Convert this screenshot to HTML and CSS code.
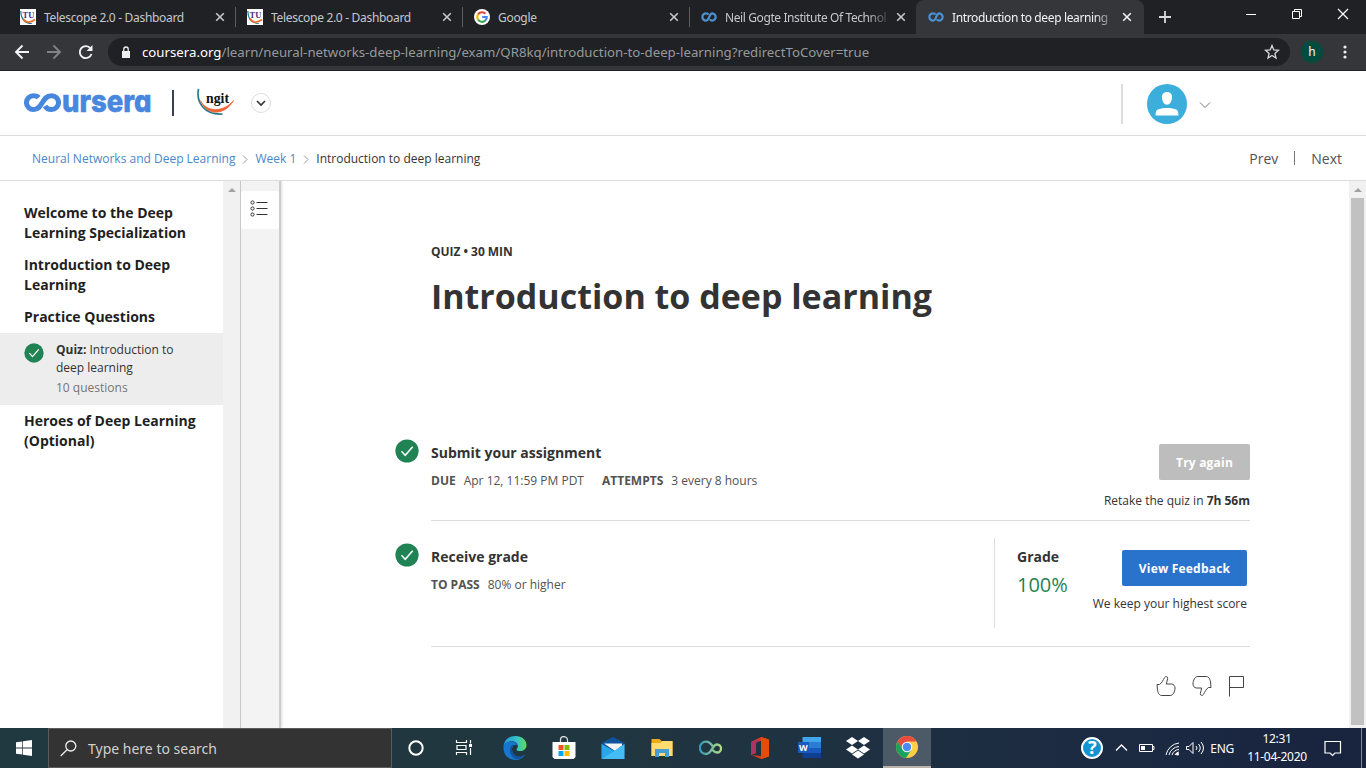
FILE: index.html
```html
<!DOCTYPE html>
<html lang="en">
<head>
<meta charset="utf-8">
<title>Introduction to deep learning | Coursera</title>
<link rel="stylesheet" href="styles.css">
</head>
<body>
<svg class="defs" width="0" height="0" aria-hidden="true">
  <symbol id="co" viewBox="0 0 16 10"><path d="M7.600 2.600C7 1.800 6.200 1.400 5.200 1.400A3.600 3.600 0 0 0 1.400 5a3.600 3.600 0 0 0 3.800 3.600C8.500 8.600 8 1.400 11.200 1.400A3.500 3.500 0 0 1 14.600 5a3.500 3.500 0 0 1-3.400 3.600C10.200 8.600 9.400 8.200 8.800 7.400" fill="none" stroke="#4a90d0" stroke-width="2.300"/></symbol>
  <symbol id="x" viewBox="0 0 10 10"><path d="M1.200 1.200l7.600 7.600M8.800 1.200L1.200 8.800" fill="none" stroke="currentColor" stroke-width="1.600"/></symbol>
  <symbol id="check" viewBox="0 0 24 24"><circle cx="12" cy="12" r="11.600" fill="#1f8354"/><path d="M6.500 12.200l3.700 4.100 7.500-8.600" fill="none" stroke="#fff" stroke-width="1.500"/></symbol>
  <symbol id="thumb" viewBox="0 0 20 22"><path d="M1 9.500h2.500c2.500-1.500 3.500-4.500 5.200-7 .8-1.500 3-1.200 3 .8 0 2.200-1.400 3.800-1.400 5.700h5.200c2.200.2 3.500 1.900 3.500 4 0 3.700-2 7.500-4.700 7.500H5.500C3 20.500 1.600 17 1.400 14z" fill="none" stroke="#444" stroke-width="1"/></symbol>
</svg>

<header class="browser">
  <div class="tabs">
    <div class="tab"><svg class="fav" viewBox="0 0 16 16"><path fill="#fff" d="M0 0h16v16H0z"/><path d="M.8 2c.2 8 4 12.500 11 12.500" fill="none" stroke="#14808c" stroke-width="1.200"/><path d="M3 9.500c2 4 7 5 12 1" fill="none" stroke="#ed702d" stroke-width="1.700"/><text x="2.500" y="9" class="tu">TU</text></svg><span class="tab-title">Telescope 2.0 - Dashboard</span><svg class="close"><use href="#x"/></svg></div>
    <div class="tab"><svg class="fav" viewBox="0 0 16 16"><path fill="#fff" d="M0 0h16v16H0z"/><path d="M.8 2c.2 8 4 12.500 11 12.500" fill="none" stroke="#14808c" stroke-width="1.200"/><path d="M3 9.500c2 4 7 5 12 1" fill="none" stroke="#ed702d" stroke-width="1.700"/><text x="2.500" y="9" class="tu">TU</text></svg><span class="tab-title">Telescope 2.0 - Dashboard</span><svg class="close"><use href="#x"/></svg></div>
    <div class="tab"><svg class="fav" viewBox="0 0 16 16"><circle cx="8" cy="8" r="8" fill="#fff"/><g fill="none" stroke-width="2.200"><path d="M4 5.500A4.800 4.800 0 0 1 11.500 4.700" stroke="#ea4335"/><path d="M4 5.500a4.800 4.800 0 0 0 0 5" stroke="#fbbc05"/><path d="M4 10.500a4.800 4.800 0 0 0 7.200 1.200" stroke="#34a853"/><path d="M11.200 11.700C12.500 10.500 12.800 9.500 12.700 8H8.200" stroke="#4285f4"/></g></svg><span class="tab-title">Google</span><svg class="close"><use href="#x"/></svg></div>
    <div class="tab last"><svg class="fav"><use href="#co"/></svg><span class="tab-title neil">Neil Gogte Institute Of Technol</span><svg class="close"><use href="#x"/></svg></div>
    <div class="tab active"><svg class="fav"><use href="#co"/></svg><span class="tab-title intro">Introduction to deep learning |</span><svg class="close"><use href="#x"/></svg></div>
    <svg class="plus" viewBox="0 0 12 12"><path d="M6 0v12M0 6h12" stroke="#d8dadd" stroke-width="1.800"/></svg>
    <svg class="window-controls" viewBox="0 0 110 14"><g fill="none" stroke="#fff"><path d="M4 7.500h10"/><path d="M50.500 4.500h7v7h-7zM52.500 4V2.500h7v7H58"/><path d="M96 2l10 10M106 2L96 12" stroke-width="1.200"/></g></svg>
  </div>
  <div class="toolbar">
    <svg class="nav-icons" viewBox="0 0 90 18"><g fill="none" stroke="#f1f3f4" stroke-width="1.900"><path d="M21 9H8M14.500 2.500L8 9l6.500 6.500"/><path d="M39 9h13M45.500 2.500L52 9l-6.500 6.500" stroke="#808286"/><path d="M82.600 5.500A6 6 0 1 0 83.500 11"/></g><path d="M84.500 2v6h-6z" fill="#f1f3f4"/></svg>
    <div class="address">
      <svg class="lock" viewBox="0 0 10 13"><path d="M1 5h8v7H1z" fill="#eee"/><path d="M2.800 5V3.200a2.200 2.200 0 0 1 4.400 0V5" fill="none" stroke="#eee" stroke-width="1.300"/></svg>
      <span class="url"><b>coursera.org</b>/learn/neural-networks-deep-learning/exam/QR8kq/introduction-to-deep-learning?redirectToCover=true</span>
      <svg class="star" viewBox="0 0 16 16"><path d="M8 1.500l1.800 4.400 4.700.4-3.600 3.100 1.100 4.600L8 11.500 4 14l1.100-4.600-3.600-3.100 4.700-.4z" fill="none" stroke="#d5d7da" stroke-width="1.300"/></svg>
    </div>
    <span class="profile">h</span>
    <svg class="dots" viewBox="0 0 4 14"><g fill="#eee"><circle cx="2" cy="2" r="1.600"/><circle cx="2" cy="7" r="1.600"/><circle cx="2" cy="12" r="1.600"/></g></svg>
  </div>
</header>

<header class="site-header">
  <svg class="logo" viewBox="0 0 130 30"><path d="M15.700 8.600C14.500 7.200 12.800 6.700 10.800 6.700A7 7 0 0 0 3.400 13.600a7 7 0 0 0 7.400 6.900C20 20.500 18.500 6.700 28.400 6.700A7 7 0 0 1 35.600 13.600a7 7 0 0 1-7.200 6.900c-3 0-5-1.200-6.400-3.600" fill="none" stroke="#4787de" stroke-width="5"/><text x="39" y="22.500" textLength="89.500" lengthAdjust="spacingAndGlyphs" class="logo-text">ursera</text></svg>
  <span class="logo-rule"></span>
  <svg class="ngit" viewBox="0 0 38 30"><path d="M2.500 1C0 14 8 27 26.500 26" fill="none" stroke="#217c8b" stroke-width="1.700"/><path d="M4.500 12.500c6 12 23 12 33 0-8 15-27 16-33 0" fill="#ef6335" stroke="#ef6335" stroke-width=".7"/><text x="10" y="15" textLength="23" lengthAdjust="spacingAndGlyphs" class="ngit-text">ngit</text></svg>
  <svg class="round-chevron" viewBox="0 0 20 20"><circle cx="10" cy="10" r="9.500" fill="#fff" stroke="#ddd"/><path d="M6 8l4 4 4-4" fill="none" stroke="#333" stroke-width="1.600"/></svg>
  <span class="account-rule"></span>
  <svg class="avatar" viewBox="0 0 40 40"><circle cx="20" cy="20" r="20" fill="#3caedb"/><path d="M20 8c3.400 0 5.200 2.300 5 5.500-.2 4.200-2.200 7.200-5 7.200s-4.800-3-5-7.200C14.800 10.300 16.600 8 20 8zM8.500 31.500c0-3.500.5-5.500 3-6.300 5-1.700 12-1.700 17 0 2.500.8 3 2.800 3 6.300z" fill="#fff"/></svg>
  <svg class="chevron" viewBox="0 0 12 8"><path d="M1 1.500l5 5 5-5" fill="none" stroke="#777"/></svg>
</header>

<nav class="crumbs">
  <a>Neural Networks and Deep Learning</a><svg class="sep" viewBox="0 0 6 9"><path d="M1 .5l4 4-4 4" fill="none" stroke="#999"/></svg><a>Week 1</a><svg class="sep" viewBox="0 0 6 9"><path d="M1 .5l4 4-4 4" fill="none" stroke="#999"/></svg><span>Introduction to deep learning</span>
  <span class="prev">Prev</span><span class="pn-rule"></span><span class="next">Next</span>
</nav>

<div class="content">
  <aside class="sidebar">
    <h3>Welcome to the Deep<br>Learning Specialization</h3>
    <h3>Introduction to Deep<br>Learning</h3>
    <h3 class="s3">Practice Questions</h3>
    <div class="current">
      <svg class="check-small"><use href="#check"/></svg>
      <div><p><b>Quiz:</b> Introduction to<br>deep learning</p><p class="count">10 questions</p></div>
    </div>
    <h3 class="s4">Heroes of Deep Learning<br>(Optional)</h3>
  </aside>
  <div class="scroll-left"><i class="up"></i></div>
  <div class="rail"><div class="rail-button"><svg viewBox="0 0 18 18"><g fill="none" stroke="#333"><circle cx="2.500" cy="2.500" r="1.600"/><circle cx="2.500" cy="8.500" r="1.600"/><circle cx="2.500" cy="14.500" r="1.600"/><path d="M6.500 2.500H17.500M6.500 8.500H17.500M6.500 14.500H17.500"/></g></svg></div></div>
  <main>
    <p class="kind">QUIZ • 30 MIN</p>
    <h1>Introduction to deep learning</h1>
    <section class="step">
      <svg class="check"><use href="#check"/></svg>
      <div class="step-body submit">
        <div class="info"><h2>Submit your assignment</h2><p class="meta"><b>DUE</b><span class="date">Apr 12, 11:59 PM PDT</span><b>ATTEMPTS</b><span>3 every 8 hours</span></p></div>
        <div class="action"><button class="try">Try again</button><p class="retake">Retake the quiz in <b>7h 56m</b></p></div>
      </div>
    </section>
    <section class="step second">
      <svg class="check"><use href="#check"/></svg>
      <div class="step-body receive">
        <div class="info"><h2>Receive grade</h2><p class="meta"><b>TO PASS</b><span>80% or higher</span></p></div>
        <div class="grade"><div><h2>Grade</h2><p class="score">100%</p></div><div class="action fb"><button class="view">View Feedback</button><p class="keep">We keep your highest score</p></div></div>
      </div>
    </section>
    <div class="feedback">
      <svg viewBox="0 0 20 22"><use href="#thumb"/></svg>
      <svg viewBox="0 0 20 22"><use href="#thumb" transform="rotate(180 10 11)"/></svg>
      <svg viewBox="0 0 20 22"><path d="M1.500 21.500V1.500h14v11h-14" fill="none" stroke="#444"/></svg>
    </div>
  </main>
  <div class="scroll-right"><i class="up"></i><div class="thumb"></div></div>
</div>

<footer class="taskbar">
  <div class="start"><svg viewBox="0 0 16 16"><path d="M0 2.300l6.300-.9v6.200H0zM7 1.300L16 0v7.600H7zM0 8.400h6.300v6.200L0 13.700zM7 8.400h9V16l-9-1.300z" fill="#fff"/></svg></div>
  <div class="search"><svg viewBox="0 0 17 17"><circle cx="10.800" cy="6" r="5" fill="none" stroke="#eee" stroke-width="1.300"/><path d="M7 9.800L.7 16" stroke="#eee" stroke-width="1.300"/></svg><span>Type here to search</span></div>
  <div class="apps">
    <div><svg viewBox="0 0 24 24"><circle cx="11" cy="12" r="6.700" fill="none" stroke="#fff" stroke-width="2"/></svg></div>
    <div><svg viewBox="0 0 24 24"><path d="M2.500 4v2.500h10V4M2.500 19v-2.500h10V19M3 9.500h9v4H3zM16.500 4v3.500M16.500 12v7" fill="none" stroke="#fff" stroke-width="1.200"/><path d="M15 8h3v3h-3z" fill="#fff"/></svg></div>
    <div><svg viewBox="0 0 24 24"><defs><linearGradient id="e"><stop stop-color="#2095dd"/><stop offset=".6" stop-color="#36c4c6"/><stop offset="1" stop-color="#62dc55"/></linearGradient></defs><path d="M.5 11C1 4 6 0 12.500 0 19 0 23.500 4 23.500 9c0 4-3 6-6.500 6-2 0-3.500-.7-3.500-1.600 0-.8 1.300-1.200 1.300-3C14.800 7 12 5.300 8.500 5.300 4.500 5.300 1.700 7.500.5 11z" fill="url(#e)"/><path d="M.5 11C2 7 5 5.500 8.500 5.500c3 0 5 1.500 5.800 3.500C12 8 9 10 9 13.500c0 5 5 8 9 7 2-.4 3.500-1.500 4-1.500C20 22.500 16.500 24 12.500 24 5 24 0 18 .5 11z" fill="#1677ce"/><path d="M9 9C5 13 7 20 12.500 23c4 .8 8-1.500 9.500-4-6 3.500-13 .5-13-5.500 0-2 .8-3.500 2.300-4.200z" fill="#15529b"/></svg></div>
    <div><svg viewBox="0 0 24 24"><path d="M8.500 7V4c0-2 1-3.500 3-3.500s4 1.500 4 3.500v3" fill="none" stroke="#ddd" stroke-width="1.300"/><path d="M.5 6h23v15l-2 2h-19l-2-2z" fill="#fff"/><path d="M6.500 9h5v5h-5z" fill="#f35325"/><path d="M12.500 9h5v5h-5z" fill="#81bc06"/><path d="M6.500 15h5v5h-5z" fill="#05a6f0"/><path d="M12.500 15h5v5h-5z" fill="#ffba08"/></svg></div>
    <div><svg viewBox="0 0 24 24"><path d="M.5 7L12 .8 23.500 7v12H.5z" fill="#0f529b"/><path d="M3 7.500h18v2L14 15z" fill="#f3f3f3"/><path d="M.5 8L14 15.500 23.500 23H.5z" fill="#28a8eb"/><path d="M23.500 8L1 23h22.500z" fill="#45bdf4"/></svg></div>
    <div><svg viewBox="0 0 24 24"><path d="M1.500 3h8l2 2h11v15h-21z" fill="#eba91b"/><path d="M1.500 7h9l2-2h10v15h-21z" fill="#ffdc70"/><path d="M5 21v-8h14v8h-4v-4H9v4z" fill="#4a9bd4"/></svg></div>
    <div><svg viewBox="0 0 24 24"><defs><linearGradient id="inf"><stop stop-color="#3598b7"/><stop offset="1" stop-color="#b2df85"/></linearGradient></defs><path d="M13.500 10c-2-3-4-4.300-6.500-4.300a5.700 5.700 0 0 0 0 12.300c6 0 6-9.500 11-9.500a4 4 0 0 1 0 8c-2 0-3.500-1.300-4.500-2.500" fill="none" stroke="url(#inf)" stroke-width="2.300"/></svg></div>
    <div><svg viewBox="0 0 24 24"><path d="M3 6L13 1l8 2.500v17L13 23l-9.500-4L13 20V5L8 6v11l-5 2z" fill="#dc3b1b"/><path d="M3 6l7-3.500V6L8 7v10l-5 1.500z" fill="#af3264"/><path d="M13 1l8 2.500v17L13 23z" fill="#e34f0b"/></svg></div>
    <div><svg viewBox="0 0 24 24"><path d="M5.500 1H24v6H5.500z" fill="#41a5ee"/><path d="M5.500 6H24v6H5.500z" fill="#2b7cd3"/><path d="M5.500 12H24v5H5.500z" fill="#185abd"/><path d="M5.500 17H24v5H5.500z" fill="#103f91"/><path d="M1 6h11v11H1z" fill="#185abd"/><text x="2" y="15" font-size="9" font-weight="700" fill="#fff">W</text></svg></div>
    <div><svg viewBox="0 0 24 24"><path d="M6 1l6 4-6 4-6-4zM18 1l6 4-6 4-6-4zM6 9.500l6 4-6 4-6-4zM18 9.500l6 4-6 4-6-4zM12 14.500l6 4-6 4-6-4z" fill="#fff"/></svg></div>
    <div class="chrome"><svg viewBox="0 0 24 24"><circle cx="12" cy="12" r="11" fill="#ffcd46"/><path d="M2.500 6.500A11 11 0 0 1 21.500 6.500H12L8 14.500z" fill="#ea4b3d"/><path d="M2.500 6.500A11 11 0 0 0 11 23l5.500-8.500L8 14.500z" fill="#19a15f"/><circle cx="12" cy="12" r="5.300" fill="#f5f5f5"/><circle cx="12" cy="12" r="4.200" fill="#4c8bf5"/></svg></div>
  </div>
  <div class="tray">
    <span class="help">?</span>
    <svg class="system" viewBox="0 0 92 20"><g fill="none" stroke="#fff"><path d="M2 12.500L7.500 7l5.500 5.500" stroke-width="1.300"/><path d="M25.500 6.500h13v7h-13zM39 8.500h1v3h-1"/><path d="M52 17A15 15 0 0 1 65 5M55 17A11 11 0 0 1 65 8.500M58 17a8 8 0 0 1 7-5.500M61 17a5 5 0 0 1 4-3"/><path d="M72.500 8.500h2.500l4-4v11l-4-4h-2.500zM82 8q2 2 0 4M84.500 6q3.500 4 0 8M87 4q5 6 0 12"/></g><path d="M27 8h4v4h-4z" fill="#fff"/><circle cx="63.500" cy="16" r="1.500" fill="#fff"/></svg>
    <span class="lang">ENG</span>
    <div class="clock"><span>12:31</span><span>11-04-2020</span></div>
    <svg class="notice" viewBox="0 0 18 17"><path d="M1 1.500h15.500V13H11l-2.500 2.500L6 13H1z" fill="none" stroke="#fff" stroke-width="1.200"/></svg>
    <span class="desktop"></span>
  </div>
</footer>
</body>
</html>
```
FILE: styles.css
```css
* { box-sizing: border-box; margin: 0; padding: 0; }
body { width: 1366px; height: 768px; overflow: hidden; background: #fff; font-family: "Open Sans", sans-serif; color: #333; display: flex; flex-direction: column; }
svg { display: block; flex: none; }
span, a, p, h1, h2, h3, b, button { white-space: nowrap; }
.defs { position: absolute; }

.browser { height: 71px; background: #35363a; border-bottom: 1px solid #202124; font-family: "Noto Sans", sans-serif; }
.tabs { height: 34px; background: #202124; display: flex; align-items: center; padding-left: 9px; }
.tab { width: 227px; height: 20px; padding: 0 10px 0 11px; display: flex; align-items: center; border-right: 1px solid #5b5d61; color: #c5c8cc; font-size: 12px; }
.tab.last { width: 226px; border: 0; padding-right: 10px; }
.tab.active { height: 34px; width: 228px; border: 0; border-radius: 8px 8px 0 0; background: #35363a; color: #f1f3f4; padding: 0 12px 0 12px; }
.fav { width: 16px; height: 16px; margin-right: 8px; }
.tu { font: 700 8.500px "Liberation Serif", serif; fill: #4b2c85; }
.tab-title { width: 161px; overflow: hidden; flex: 1; letter-spacing: -.31px; }
.tab-title.neil { letter-spacing: -.4px; }
.tab-title.intro { letter-spacing: -.37px; }
.neil, .intro { -webkit-mask-image: linear-gradient(90deg, #000 88%, transparent 103%); mask-image: linear-gradient(90deg, #000 88%, transparent 103%); }
.close { width: 10px; height: 10px; margin-left: 9px; }
.plus { width: 12px; height: 12px; margin-left: 15px; }
.window-controls { width: 110px; height: 14px; margin: -6px 0 0 71px; }
.toolbar { height: 36px; display: flex; align-items: center; padding-left: 8px; }
.nav-icons { width: 90px; height: 18px; }
.address { width: 1182px; height: 28px; margin-left: 10px; border-radius: 14px; background: #202124; display: flex; align-items: center; padding: 0 10px 0 13px; }
.lock { width: 10px; height: 13px; }
.url { flex: 1; margin-left: 11px; font-size: 13.240px; color: #96999d; }
.url b { color: #fff; font-weight: 400; }
.star { width: 16px; height: 16px; }
.profile { width: 22px; height: 22px; border-radius: 50%; background: #004d40; color: #fff; text-align: center; font-size: 12px; line-height: 21px; margin-left: 11px; }
.dots { width: 4px; height: 14px; margin-left: 20px; }

.site-header { height: 65px; border-bottom: 1px solid #ddd; display: flex; align-items: center; padding-left: 23px; }
.logo { width: 130px; height: 30px; margin-top: 1px; overflow: visible; }
.logo-text { font: 800 31px Inter, sans-serif; font-feature-settings: "cv11"; fill: #4787de; stroke: #4787de; stroke-width: .6px; }
.logo-rule { width: 2px; height: 26px; background: #384052; margin-left: 19px; }
.ngit { width: 38px; height: 30px; margin: 0 0 0 22px; }
.ngit-text { font: 700 15px "Liberation Serif", serif; fill: #111; }
.round-chevron { width: 20px; height: 20px; margin-left: 17px; }
.account-rule { width: 2px; height: 40px; background: #ddd; margin: 2px 0 0 850px; }
.avatar { width: 40px; height: 40px; margin: 2px 0 0 24px; }
.chevron { width: 12px; height: 8px; margin: 4px 0 0 12px; }

.crumbs { height: 45px; border-bottom: 1px solid #ddd; display: flex; align-items: center; padding: 0 24px 0 32px; font-size: 12px; }
.crumbs a { color: #4a88c8; }
.sep { width: 6px; height: 9px; margin: 2px 7px 0; }
.prev { margin-left: auto; font-size: 14px; color: #525252; }
.next { font-size: 14px; color: #525252; }
.pn-rule { width: 1px; height: 14px; background: #777; margin: 0 16px; }

.content { height: 547px; display: flex; }
.sidebar { width: 223px; padding-top: 22px; color: #1f1f1f; }
.sidebar h3 { padding-left: 24px; font-size: 14px; line-height: 20px; font-weight: 700; margin-bottom: 12px; }
.sidebar .s3 { margin-bottom: 6px; }
.current { background: #ededed; height: 72px; display: flex; padding: 8px 0 0 24px; font-size: 12px; line-height: 18px; color: #333; }
.check-small { width: 20px; height: 20px; margin: 2px 12px 0 0; }
.count { margin-top: 2px; color: #757575; }
.sidebar .s4 { margin-top: 6px; }
.scroll-left, .scroll-right { width: 17px; background: #f1f1f1; display: flex; flex-direction: column; align-items: center; }
.up { border: 4px solid transparent; border-top: 0; border-bottom-color: #a3a3a3; margin-top: 7px; }
.rail { width: 41px; border-left: 1px solid #c8c8c8; border-right: 2px solid #cdcdcd; background: #f3f3f3; padding-top: 10px; box-shadow: 1px 0 2px #ddd; }
.rail-button { height: 38px; background: #fff; display: flex; padding: 9px; border-radius: 2px; }
.rail svg { width: 18px; height: 18px; }
main { width: 1068px; padding-top: 61px; }
.kind { margin-left: 150px; font-size: 12px; font-weight: 700; line-height: 20px; letter-spacing: -.03px; }
h1 { margin: 10px 0 0 150px; font-size: 34px; font-weight: 700; line-height: 48px; }
.step { margin: 115px 0 0 114px; display: flex; gap: 12px; }
.step.second { margin-top: 17px; }
.check { width: 24px; height: 24px; margin-top: 4px; }
.step-body { width: 819px; border-bottom: 1px solid #ddd; display: flex; justify-content: space-between; }
.submit { height: 86px; }
.receive { height: 109px; }
.info { padding-top: 6px; }
.second .info { padding-top: 7px; }
.second .check { margin-top: 5px; }
h2 { font-size: 14px; line-height: 24px; font-weight: 700; }
.meta { margin-top: 8px; display: flex; font-size: 12px; line-height: 16px; color: #525252; }
.meta b { font-weight: 700; margin-right: 8px; }
.date { margin-right: 18px; }
.action { display: flex; flex-direction: column; align-items: flex-end; padding-top: 9px; }
button { border: 0; border-radius: 2px; height: 36px; color: #fff; font: 700 12px "Open Sans", sans-serif; letter-spacing: .2px; }
.try { width: 91px; background: #bdbdbd; }
.retake, .keep { font-size: 12px; line-height: 20px; margin-top: 11px; }
.retake b { font-weight: 700; }
.grade { width: 256px; height: 90px; border-left: 1px solid #ddd; display: flex; justify-content: space-between; padding: 7px 3px 0 22px; }
.score { font-size: 20px; line-height: 28px; margin-top: 2px; color: #1f8354; }
.action.fb { padding-top: 5px; }
.view { width: 125px; background: #2a73cc; }
.keep { margin-top: 8px; }
.feedback { margin: 28px 0 0 875px; display: flex; gap: 16px; }
.feedback svg { width: 20px; height: 22px; }
.scroll-right .thumb { width: 13px; height: 527px; margin-top: 6px; background: #c1c1c1; }

.taskbar { height: 40px; display: flex; background: linear-gradient(90deg, #20383f, #203640 45%, #1c2942 85%, #18233e); font-family: "Noto Sans", sans-serif; color: #fff; }
.start { width: 48px; display: grid; place-items: center; }
.start svg { width: 16px; height: 16px; }
.search { width: 344px; background: #333; border: 1px solid #5c5c5c; display: flex; align-items: center; padding-left: 11px; color: #d0d0d0; font-size: 14px; }
.search svg { width: 17px; height: 17px; margin-right: 11px; }
.apps { display: flex; }
.apps div { width: 49.100px; display: grid; place-items: center; }
.apps svg { width: 24px; height: 24px; }
.apps .chrome { background: #4c5967; border-bottom: 2px solid #b9b5ad; width: 48px; }
.tray { margin-left: auto; display: flex; align-items: center; }
.help { width: 22px; height: 22px; border-radius: 50%; background: #1394d2; border: 2px solid #fff; font-size: 18px; font-weight: 700; line-height: 17px; text-align: center; }
.system { width: 92px; height: 20px; margin-left: 11px; }
.lang { font-size: 12px; margin-left: 4px; letter-spacing: -.3px; }
.clock { width: 60px; margin-left: 13px; display: flex; flex-direction: column; align-items: center; font-size: 12px; line-height: 18px; letter-spacing: -.3px; }
.notice { width: 18px; height: 17px; margin-left: 17px; }
.desktop { width: 1px; height: 40px; background: #7f8999; margin: 0 4px 0 19px; }
```
